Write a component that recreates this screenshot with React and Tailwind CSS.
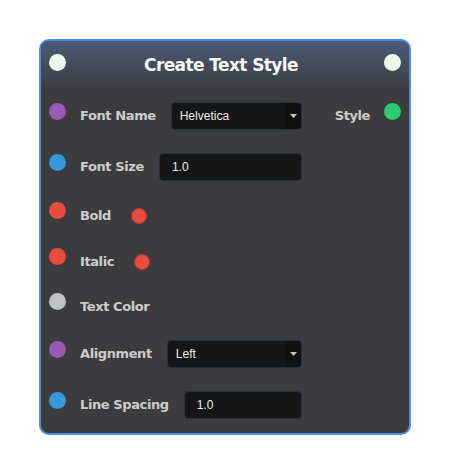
import { useState } from "react";

const labelCls = "text-[13px] font-bold tracking-[-0.4px] text-[#cdcdcd] whitespace-nowrap";
const fieldCls = "h-[28px] w-0 flex-1 min-w-0 rounded-[4px] border border-[#243247] bg-[#161616] text-[12px] text-[#ececec] outline-none";

function Dot({ color, className = "" }) {
  return <span className={`block h-[17px] w-[17px] shrink-0 rounded-full ${color} ${className}`} />;
}

function Select({ value, options, onChange }) {
  return (
    <div className={`${fieldCls} relative flex items-center`}>
      <select
        value={value}
        onChange={e => onChange(e.target.value)}
        className="h-full w-full appearance-none bg-transparent pl-[8px] pr-[20px] outline-none"
      >
        {options.map(o => (
          <option key={o} value={o}>{o}</option>
        ))}
      </select>
      <span className="pointer-events-none absolute right-0 top-0 flex h-full w-[16px] items-center justify-center rounded-r-[4px] bg-[#111111]">
        <svg width="7" height="4" viewBox="0 0 7 4">
          <path d="M0 0h7L3.5 4z" fill="#c8c8c8" />
        </svg>
      </span>
    </div>
  );
}

function Row({ dot, label, children, height = "h-[28px]", labelGap = "gap-[15px]" }) {
  return (
    <div className={`flex items-center ${height}`}>
      <Dot color={dot} className="mb-[10px]" />
      <div className={`ml-[14px] flex min-w-0 flex-1 items-center ${labelGap}`}>
        <span className={labelCls}>{label}</span>
        {children}
      </div>
    </div>
  );
}

export default function App() {
  const [fontName, setFontName] = useState("Helvetica");
  const [fontSize, setFontSize] = useState("1.0");
  const [align, setAlign] = useState("Left");
  const [spacing, setSpacing] = useState("1.0");

  return (
    <div className="pl-[39px] pt-[39px]" style={{ fontFamily: '"DejaVu Sans", sans-serif' }}>
      <div className="w-[372px] h-[396px] overflow-hidden rounded-[10px] border-2 border-[#4a90e2] bg-[#3c3c3e]">
        <div className="flex h-[50px] items-center bg-gradient-to-b from-[#4b5b79] to-[#3c3c3e] px-[8px]">
          <Dot color="bg-[#eef7ec]" className="mb-[8px]" />
          <div className="flex-1 pr-[8px] text-center text-[17px] font-bold tracking-[-0.6px] text-[#f7f7f7]">
            Create Text Style
          </div>
          <Dot color="bg-[#eef7ec]" className="mb-[8px]" />
        </div>

        <div className="flex px-[8px] pt-[11px]">
          <div className="flex w-[253px] flex-col gap-[23px]">
            <Row dot="bg-[#9b59b6]" label="Font Name">
              <div className="flex min-w-0 flex-1" style={{ fontFamily: '"Liberation Sans", Arial, sans-serif' }}>
                <Select value={fontName} onChange={setFontName} options={["Helvetica", "Arial", "Times", "Courier"]} />
              </div>
            </Row>
            <Row dot="bg-[#3498db]" label="Font Size">
              <input
                value={fontSize}
                onChange={e => setFontSize(e.target.value)}
                className={`${fieldCls} pl-[12px]`}
                style={{ fontFamily: '"Liberation Sans", Arial, sans-serif' }}
              />
            </Row>
            <Row dot="bg-[#e74c3c]" label="Bold" height="h-[23px]" labelGap="gap-[20px]">
              <span className="mt-[1px] block h-[16px] w-[16px] rounded-full border border-[#b23a2e] bg-[#e74c3c]" />
            </Row>
            <Row dot="bg-[#e74c3c]" label="Italic" height="h-[23px]" labelGap="gap-[20px]">
              <span className="mt-[1px] block h-[16px] w-[16px] rounded-full border border-[#b23a2e] bg-[#e74c3c]" />
            </Row>
            <Row dot="bg-[#bdc3c7]" label="Text Color" height="h-[21px]" />
            <Row dot="bg-[#9b59b6]" label="Alignment">
              <div className="flex min-w-0 flex-1" style={{ fontFamily: '"Liberation Sans", Arial, sans-serif' }}>
                <Select value={align} onChange={setAlign} options={["Left", "Center", "Right", "Justify"]} />
              </div>
            </Row>
            <Row dot="bg-[#3498db]" label="Line Spacing">
              <input
                value={spacing}
                onChange={e => setSpacing(e.target.value)}
                className={`${fieldCls} pl-[12px]`}
                style={{ fontFamily: '"Liberation Sans", Arial, sans-serif' }}
              />
            </Row>
          </div>

          <div className="flex flex-1 flex-col items-end">
            <div className="flex h-[28px] items-center gap-[14px]">
              <span className={labelCls}>Style</span>
              <Dot color="bg-[#2ecc71]" className="mb-[10px]" />
            </div>
          </div>
        </div>
      </div>
    </div>
  );
}
